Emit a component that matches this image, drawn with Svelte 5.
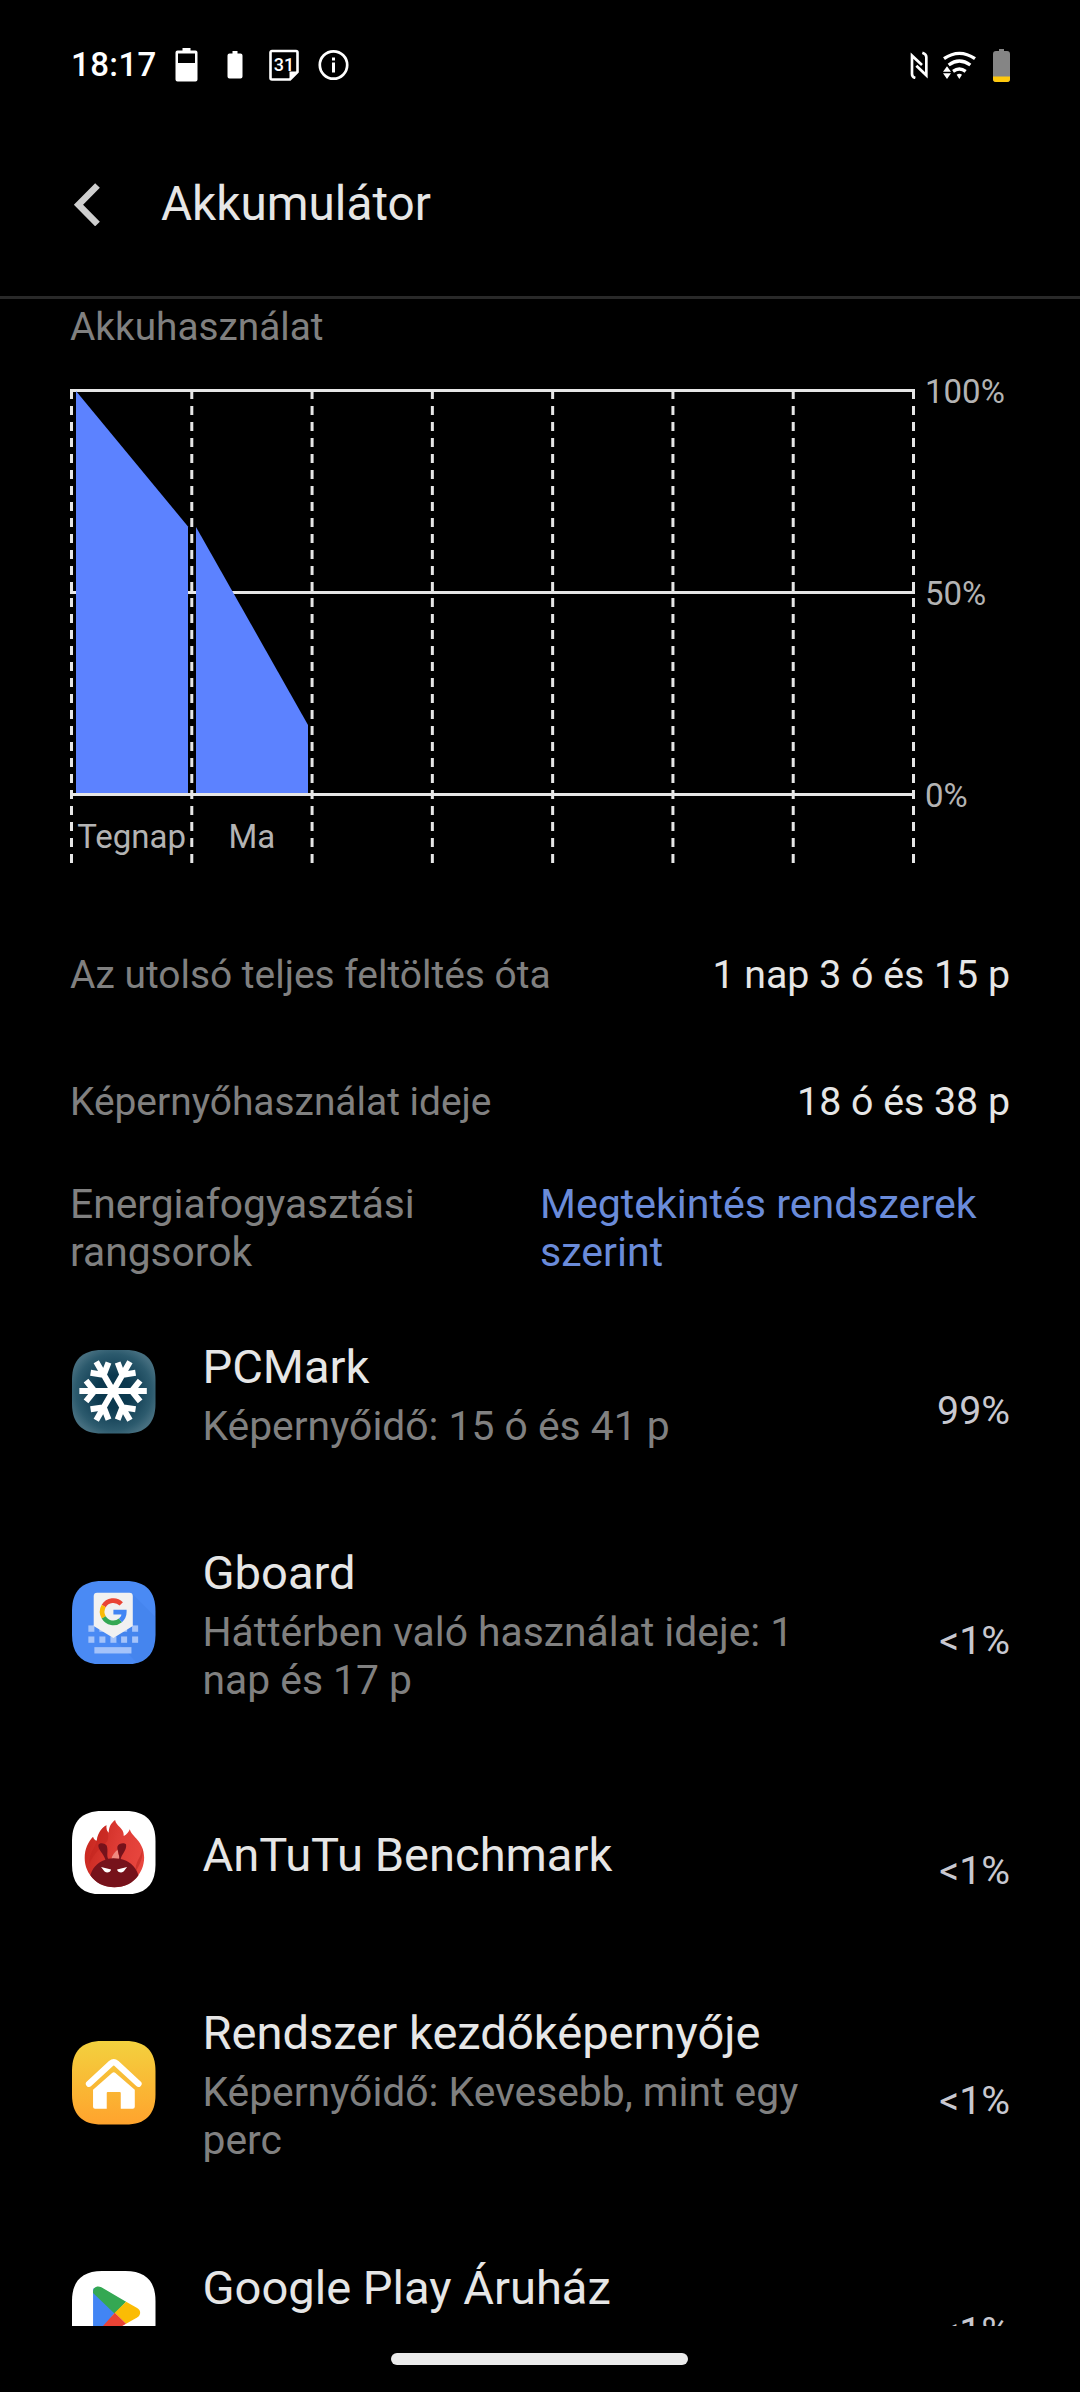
<script>
  const columns = 7;
  const left = 71.5;
  const step = 842 / columns;
  const grid = Array.from({ length: columns + 1 }, (_, i) => left + i * step);

  const levels = [
    { label: "100%", y: 390.5 },
    { label: "50%", y: 592.5 },
    { label: "0%", y: 794.5 }
  ];

  const days = [
    { label: "Tegnap", from: 391, to: 526.5 },
    { label: "Ma", from: 527, to: 725 }
  ];

  const stats = [
    { label: "Az utolsó teljes feltöltés óta", value: "1 nap 3 ó és 15 p" },
    { label: "Képernyőhasználat ideje", value: "18 ó és 38 p" }
  ];

  const apps = [
    { icon: "pcmark", name: "PCMark", detail: "Képernyőidő: 15 ó és 41 p", usage: "99%" },
    { icon: "gboard", name: "Gboard", detail: "Háttérben való használat ideje: 1 nap és 17 p", usage: "<1%" },
    { icon: "antutu", name: "AnTuTu Benchmark", detail: "", usage: "<1%" },
    { icon: "home", name: "Rendszer kezdőképernyője", detail: "Képernyőidő: Kevesebb, mint egy perc", usage: "<1%" },
    { icon: "play", name: "Google Play Áruház", detail: "\u00a0", usage: "<1%" }
  ];

  const squircle = "M0 90C0 30 30 0 90 0H160C220 0 250 30 250 90V160C250 220 220 250 160 250H90C30 250 0 220 0 160Z";
</script>

<div class="screen">
  <div class="status">
    <span class="time">18:17</span>
    <div class="notifications">
      <svg width="31" height="34" viewBox="0 0 31 34">
        <path d="M11.500 0h8v2.500h5a2 2 0 0 1 2 2v27a2 2 0 0 1-2 2h-18a2 2 0 0 1-2-2v-27a2 2 0 0 1 2-2h5z" fill="#fff" />
        <path d="M7 5.500h17v9.500h-17z" fill="#000" />
      </svg>
      <svg width="31" height="34" viewBox="0 0 31 34">
        <path d="M12.500 3h5v2.500h3a2 2 0 0 1 2 2v21a2 2 0 0 1-2 2h-11a2 2 0 0 1-2-2v-21a2 2 0 0 1 2-2h3z" fill="#fff" />
      </svg>
      <svg width="31" height="34" viewBox="0 0 31 34">
        <path d="M3 3H27a1.500 1.500 0 0 1 1.500 1.500V24L21 31.500H3A1.500 1.500 0 0 1 1.500 30V4.500A1.500 1.500 0 0 1 3 3z" fill="none" stroke="#fff" stroke-width="2.600" />
        <path d="M28 23.500h-7.500v7.500z" fill="#fff" />
        <text x="15" y="23" class="date">31</text>
      </svg>
      <svg width="31" height="34" viewBox="0 0 31 34">
        <circle cx="15.500" cy="17" r="13.700" fill="none" stroke="#fff" stroke-width="2.700" />
        <path d="M15.500 14.500v10M15.500 9.500v3" stroke="#fff" stroke-width="3" />
      </svg>
    </div>
    <div class="system">
      <svg width="18" height="28" viewBox="88 60 54 84" fill="none" stroke="#fff" stroke-width="8">
        <path d="M104 141C97 139 94 136 94 129V74L124 102" />
        <path d="M125 65C134 68 137 71 137 78V133L107 104" />
      </svg>
      <svg class="wifi" width="33" height="28" viewBox="189 60 99 84">
        <g fill="none" stroke="#fff" stroke-width="10">
          <path d="M192 83Q238 51 285 83" />
          <path d="M206 102Q238 78 271 102" />
          <path d="M219 121Q238 107 257 121" />
        </g>
        <path d="M230 131Q238 125 246 131L238 144z" fill="#fff" />
        <path d="M201 100L218 120V130L201 150H186V118z" fill="#000" />
        <path d="M201 106L213 122H189zM189 127H213L201 144z" fill="#fff" />
      </svg>
      <svg class="battery" width="17" height="33" viewBox="0 0 17 33">
        <path d="M6 0h5v2h3a3 3 0 0 1 3 3v25a3 3 0 0 1-3 3h-11a3 3 0 0 1-3-3v-25a3 3 0 0 1 3-3h3z" fill="#858585" />
        <path d="M0 27.500h17v2.500a3 3 0 0 1-3 3h-11a3 3 0 0 1-3-3z" fill="#ffc90e" />
      </svg>
    </div>
  </div>

  <header>
    <svg width="28" height="44" viewBox="0 0 28 44">
      <path d="M25.500 3.500L6.500 22.700L25.500 42" fill="none" stroke="#cfcfcf" stroke-width="6.600" />
    </svg>
    <h1>Akkumulátor</h1>
  </header>

  <main>
    <h2>Akkuhasználat</h2>

    <svg class="chart" width="1080" height="510" viewBox="0 370 1080 510">
      {#each levels as level}
        <path class="line" d="M70 {level.y}H915" />
        <text class="label" x="925" y={level.y + 12.500}>{level.label}</text>
      {/each}
      {#each days as day, i}
        <path
          fill="#5c82ff"
          d="M{76 + i * 120} {day.from}L{188 + i * 120} {day.to}V793H{76 + i * 120}Z"
        />
        <text class="label day" x={left + (i + 0.5) * step} y="848">{day.label}</text>
      {/each}
      {#each grid as x}
        <path class="line dashed" d="M{x} 390V864" />
      {/each}
    </svg>

    {#each stats as stat}
      <div class="stat">
        <span>{stat.label}</span>
        <span class="value">{stat.value}</span>
      </div>
    {/each}

    <div class="ranking">
      <span class="caption">Energiafogyasztási rangsorok</span>
      <span class="link">Megtekintés rendszerek szerint</span>
    </div>

    {#each apps as app}
      <div class="app">
        <svg class="icon" width="83.500" height="83.500" viewBox="0 0 250 250">
          {#if app.icon === "pcmark"}
            <defs>
              <radialGradient id="ice" r="0.65">
                <stop offset="0.3" stop-color="#0b384e" />
                <stop offset="0.7" stop-color="#2c5a6d" />
                <stop offset="0.85" stop-color="#456e7f" />
              </radialGradient>
            </defs>
            <path d={squircle} fill="url(#ice)" />
            <g transform="translate(123 123)" fill="none" stroke="#fff" stroke-width="18">
              {#each [0, 60, 120, 180, 240, 300] as angle}
                <path transform="rotate({angle})" d="M0 0H101M81 -31L56 0L81 31" />
              {/each}
            </g>
          {:else if app.icon === "gboard"}
            <path d={squircle} fill="#4a8af4" />
            <path d="M182 40L249 107V160C249 205 230 235 195 246L124 171L182 135z" fill="#3f7ce6" opacity=".4" />
            <g fill="#a4c3fa">
              {#each [49, 82, 115, 147, 180] as x}
                <rect {x} y="133" width="18" height="19" />
                <rect {x} y="166" width="18" height="19" />
              {/each}
              <rect x="67" y="198" width="111" height="19" />
            </g>
            <path d="M75 35H172Q182 35 182 45V135L124 171L65 135V45Q65 35 75 35z" fill="#f1f1f1" />
            <g transform="translate(124 92)" fill="none" stroke-width="14">
              <path d="M23.500 -23.500A33.500 33.500 0 0 0 -29 -17" stroke="#e94435" />
              <path d="M-29 -17A33.500 33.500 0 0 0 -29 17" stroke="#fabb05" />
              <path d="M-29 17A33.500 33.500 0 0 0 21 26" stroke="#34a853" />
              <path d="M21 26A33.500 33.500 0 0 0 32.500 1H0" stroke="#4285f4" />
            </g>
          {:else if app.icon === "antutu"}
            <defs>
              <linearGradient id="flame" x1="0" x2="1" y1="0.3" y2="0.6">
                <stop offset="0.1" stop-color="#cb2a22" />
                <stop offset="0.5" stop-color="#dd3b34" />
                <stop offset="1" stop-color="#e9473f" />
              </linearGradient>
            </defs>
            <path d={squircle} fill="#fff" />
            <g transform="translate(-38 -49)">
              <path d="M76 190C76 162 86 142 101 126C103 132 106 136 112 138C116 116 124 102 141 92C140 102 142 110 148 114C148 98 154 86 167 76C170 96 194 98 193 124C202 120 208 112 211 104C216 126 254 140 254 188C254 238 214 277 165 277C116 277 76 240 76 190z" fill="url(#flame)" />
              <path d="M112 138C116 116 124 102 141 92C138 110 152 118 144 138C128 158 106 170 90 206C88 176 108 160 112 138z" fill="#c1241d" opacity=".5" />
              <path d="M250 160C252 190 240 210 230 228C224 206 244 190 250 160z" fill="#c62d27" opacity=".7" />
              <path d="M177 163C166 172 158 182 156 192H184C176 182 174 172 177 163z" fill="#ef8a80" />
              <path d="M93 241C102 212 122 200 138 195C134 178 115 166 117 151C120 142 138 145 142 153C147 168 141 180 146 192Q162 189 179 192C182 180 172 166 174 155C178 144 198 143 200 150C202 168 186 178 184 193C206 198 228 212 237 241C222 264 196 277 165 277C134 277 108 264 93 241z" fill="#76121b" />
              <path d="M125 217L155 224C154 234 137 237 132 226zM203 217L173 224C174 234 191 237 196 226z" fill="#fff" />
            </g>
          {:else if app.icon === "home"}
            <defs>
              <linearGradient id="sun" x2="0" y2="1">
                <stop offset="0" stop-color="#f3d13e" />
                <stop offset="1" stop-color="#ffa32d" />
              </linearGradient>
            </defs>
            <path d={squircle} fill="url(#sun)" />
            <path d="M51 128L117 67Q125 60 133 67L199 128" fill="none" stroke="#fff" stroke-width="19" stroke-linecap="round" />
            <path d="M63 146L120 96Q125 91 130 96L188 146V197Q188 203 182 203H146V156Q146 153 143 153H107Q104 153 104 156V203H69Q63 203 63 197z" fill="#fff" />
          {:else}
            <path d={squircle} fill="#fff" />
            <path d="M63 58V192C63 198 65 201 67 203L128 125L67 50C64 52 63 55 63 58z" fill="#4285f4" />
            <path d="M63 66C62 48 76 42 88 49L162 92L128 128z" fill="#34a853" />
            <path d="M162 92L195 111C207 118 207 132 195 139L162 158L128 125z" fill="#fbbc04" />
            <path d="M128 125L162 158L88 201C76 208 66 204 65 196z" fill="#ea4335" />
          {/if}
        </svg>
        <div class="info">
          <div class="name">{app.name}</div>
          {#if app.detail}
            <div class="detail">{app.detail}</div>
          {/if}
        </div>
        <span class="usage">{app.usage}</span>
      </div>
    {/each}
  </main>

  <nav><div class="handle"></div></nav>
</div>

<style>
  :global(body) {
    margin: 0;
    background: #000;
  }

  .screen {
    display: flex;
    flex-direction: column;
    width: 1080px;
    height: 2392px;
    overflow: hidden;
    background: #000;
    color: #e6e6e6;
    font-family: Roboto, sans-serif;
  }

  svg {
    display: block;
    flex: none;
  }

  .status {
    display: flex;
    align-items: center;
    height: 94px;
    padding: 18px 70px 0 71px;
  }

  .time {
    width: 100px;
    color: #fff;
    font-size: 33px;
    font-weight: 500;
    letter-spacing: 0.4px;
    line-height: 40px;
    margin-top: -1px;
  }

  .notifications {
    display: flex;
    gap: 18px;
  }

  .date {
    fill: #fff;
    font-size: 18px;
    font-weight: 500;
    text-anchor: middle;
  }

  .system {
    display: flex;
    align-items: center;
    margin-left: auto;
  }

  .wifi {
    margin-left: 15px;
  }

  .battery {
    margin-left: 17px;
  }

  header {
    display: flex;
    align-items: center;
    height: 184px;
    padding-left: 72px;
    border-bottom: 3px solid #292929;
  }

  h1 {
    margin: 0 0 0 61px;
    font-size: 47.7px;
    font-weight: 400;
    line-height: 56px;
  }

  main {
    flex: 1;
    min-height: 0;
    overflow: hidden;
    padding-top: 5px;
  }

  h2 {
    margin: 0 70px 20px;
    color: #808080;
    font-size: 38.8px;
    font-weight: 400;
    line-height: 46px;
  }

  .line {
    fill: none;
    stroke: #e6e6e6;
    stroke-width: 3;
  }

  .dashed {
    stroke-dasharray: 9 7;
  }

  .label {
    fill: #b3b3b3;
    font-size: 33px;
  }

  .day {
    text-anchor: middle;
  }

  .stat {
    display: flex;
    align-items: center;
    justify-content: space-between;
    height: 127px;
    padding: 0 70px;
    color: #808080;
    font-size: 38.9px;
  }

  .chart {
    margin-bottom: 31px;
  }

  .value {
    color: #e6e6e6;
    font-size: 39.3px;
  }

  .ranking {
    display: flex;
    padding: 15px 70px 3px;
    color: #808080;
    font-size: 40.75px;
    line-height: 48px;
  }

  .caption,
  .link {
    flex: 1;
  }

  .link {
    color: #6a8bd9;
    font-size: 41.1px;
  }

  .app {
    display: flex;
    align-items: center;
    height: 230.25px;
    padding: 0 70px 0 72px;
  }

  .icon {
    margin-top: -4px;
  }

  .info {
    width: 610px;
    margin-left: 47px;
  }

  .name {
    font-size: 47.1px;
    line-height: 55px;
  }

  .detail {
    margin-top: 8px;
    color: #808080;
    font-size: 40.8px;
    line-height: 48px;
  }

  .usage {
    margin: 33px 0 0 auto;
    color: #c8c8d0;
    font-size: 39.3px;
  }

  nav {
    display: flex;
    justify-content: center;
    height: 39px;
    padding: 27px 1px 0 0;
  }

  .handle {
    width: 297px;
    height: 12px;
    border-radius: 6px;
    background: #ebebeb;
  }
</style>
